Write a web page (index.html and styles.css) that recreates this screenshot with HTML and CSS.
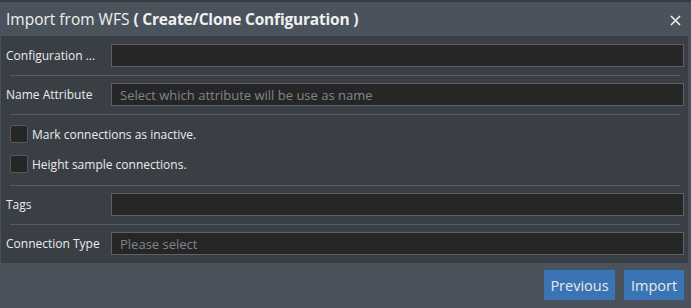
FILE: index.html
```html
<!DOCTYPE html>
<html>
<head>
<meta charset="utf-8">
<link rel="stylesheet" href="styles.css">
</head>
<body>
<div class="dialog">
  <div class="header">
    <div class="title">Import from WFS <b>( Create/Clone Configuration )</b></div>
    <svg class="close" width="11" height="11" viewBox="0 0 11 11"><path d="M1 1L10 10M10 1L1 10" stroke="#f2f2f2" stroke-width="1.6"/></svg>
  </div>
  <div class="body">
    <div class="row">
      <label class="lbl">Configuration ...</label>
      <div class="input"></div>
    </div>
    <div class="sep"></div>
    <div class="row">
      <label class="lbl">Name Attribute</label>
      <div class="input"><span class="ph">Select which attribute will be use as name</span></div>
    </div>
    <div class="sep sep-check"></div>
    <div class="check"><span class="box"></span><span>Mark connections as inactive.</span></div>
    <div class="check check2"><span class="box"></span><span>Height sample connections.</span></div>
    <div class="sep"></div>
    <div class="row">
      <label class="lbl">Tags</label>
      <div class="input"></div>
    </div>
    <div class="sep"></div>
    <div class="row">
      <label class="lbl">Connection Type</label>
      <div class="input"><span class="ph">Please select</span></div>
    </div>
  </div>
  <div class="footer">
    <button class="btn btn-prev">Previous</button>
    <button class="btn">Import</button>
  </div>
</div>
</body>
</html>
```
FILE: styles.css
```css
html, body {
  margin: 0;
  padding: 0;
  background: #4a535c;
}
body {
  width: 691px;
  height: 308px;
  overflow: hidden;
  font-family: "Open Sans", "Noto Sans", sans-serif;
  color: #ececec;
}
.dialog {
  width: 691px;
  height: 308px;
  box-sizing: border-box;
  border-top: 2px solid #363c42;
  background: #4a535c;
  display: flex;
  flex-direction: column;
}
.header {
  height: 34px;
  flex: none;
  display: flex;
  align-items: center;
  justify-content: space-between;
  padding: 0 10px 0 6px;
}
.title {
  font-size: 15.5px;
  color: #f0f0f0;
}
.title b {
  font-weight: 700;
  letter-spacing: -0.2px;
}
.close {
  margin-top: 2px;
}
.body {
  flex: none;
  margin: 0 3px 0 1px;
  background: #393f45;
  padding: 8px 4px 8px 5px;
  font-size: 12px;
}
.row {
  display: flex;
  align-items: center;
  height: 23px;
}
.lbl {
  width: 105px;
  color: #ececec;
  white-space: nowrap;
}
.input {
  flex: 1;
  height: 23px;
  box-sizing: border-box;
  background: #262626;
  border: 1px solid #5c6166;
  display: flex;
  align-items: center;
  padding-left: 8px;
}
.ph {
  color: #80858a;
  font-size: 13px;
}
.sep {
  height: 1px;
  background: #565b60;
  margin: 8px 4px 7px 4px;
}
.sep-check {
  margin-bottom: 10px;
}
.check {
  display: flex;
  align-items: center;
  gap: 4px;
  margin-left: 4px;
  height: 18px;
  font-size: 12px;
}
.check2 {
  margin-top: 12px;
  margin-bottom: 12px;
}
.box {
  width: 18px;
  height: 18px;
  box-sizing: border-box;
  background: #262626;
  border: 1px solid #55595e;
  border-radius: 2px;
}
.footer {
  flex: 1;
  display: flex;
  justify-content: flex-end;
  align-items: flex-start;
  gap: 9px;
  padding: 7px 7px 0 0;
}
.btn {
  height: 30px;
  border: none;
  background: #3a74b4;
  color: #eaeaea;
  font-family: "Open Sans", "Noto Sans", sans-serif;
  font-size: 14.5px;
  padding: 0;
  width: 60px;
}
.btn-prev {
  width: 71px;
}
```
